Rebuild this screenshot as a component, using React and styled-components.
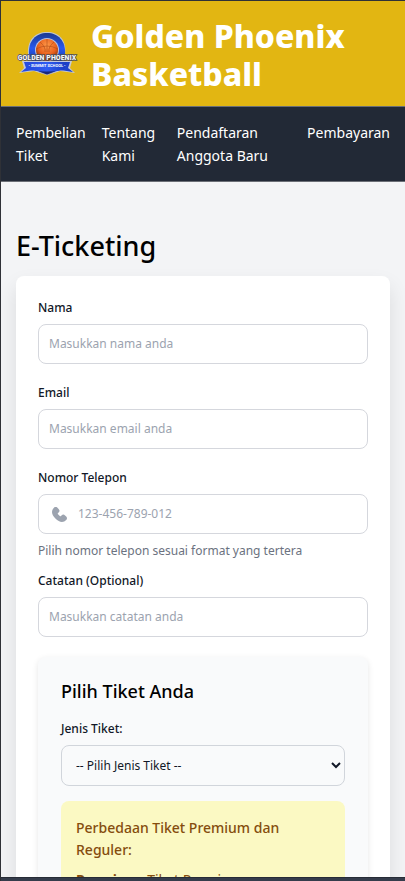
import React from "react";
import styled, { createGlobalStyle } from "styled-components";

const Global = createGlobalStyle`
  *, *::before, *::after { box-sizing: border-box; }
  body {
    margin: 0;
    font-family: "Noto Sans", "Open Sans", sans-serif;
    color: #000;
    background: #f3f4f6;
  }
  h1, h2, h3, p { margin: 0; font-weight: inherit; }
  input, select { font-family: inherit; color: inherit; }
`;

const Frame = styled.div`
  display: flex;
  flex-direction: column;
  height: 100vh;
  border: solid #2f3137;
  border-width: 1px 0 0 1px;
`;

const Viewport = styled.div`
  flex: 1;
  min-height: 0;
  overflow-y: auto;
  scrollbar-width: none;
  background: #f3f4f6;
`;

const BottomEdge = styled.div`
  flex: none;
  height: 4px;
  background: #353c4b;
  border-top: 1px solid #272c36;
`;

const Header = styled.header`
  display: flex;
  align-items: center;
  gap: 15px;
  padding: 16px 15px 13px;
  background: #e2b612;
`;

const Brand = styled.h1`
  flex: 1;
  font-size: 32px;
  line-height: 38px;
  font-weight: 800;
  color: #fff;
`;

const Nav = styled.nav`
  display: grid;
  grid-template-columns: 69fr 60fr 116fr 82fr;
  gap: 16px;
  padding: 14px 15px;
  background: #222936;
  border: solid #6b6f76;
  border-width: 1px 0;
`;

const NavLink = styled.a`
  font-size: 14px;
  line-height: 23px;
  color: #fff;
  text-decoration: none;
`;

const Main = styled.main`
  padding: 45px 15px;
`;

const PageTitle = styled.h2`
  margin-bottom: 11px;
  font-size: 27px;
  line-height: 38px;
  font-weight: 500;
`;

const Card = styled.form`
  padding: 23px 22px;
  background: #fff;
  border-radius: 8px;
  box-shadow: 0 10px 20px rgba(0, 0, 0, 0.1);
`;

const Field = styled.div`
  display: flex;
  flex-direction: column;
  margin-bottom: ${(p) => p.$gap || 20}px;
`;

const Label = styled.label`
  margin-bottom: 7px;
  font-size: 12px;
  line-height: 18px;
  font-weight: 500;
  color: #111827;
`;

const InputBox = styled.div`
  display: flex;
  align-items: center;
  gap: 11px;
  height: 40px;
  padding: 0 10px;
  padding-left: ${(p) => (p.$withIcon ? "13px" : "10px")};
  border: 1px solid #d5d7dd;
  border-radius: 8px;
`;

const TextInput = styled.input`
  flex: 1;
  min-width: 0;
  padding: 0;
  border: 0;
  outline: 0;
  background: transparent;
  font-size: 12px;
  line-height: 20px;
  &::placeholder { color: #9ca3af; opacity: 1; }
`;

const Hint = styled.p`
  margin-top: 7px;
  font-size: 12px;
  line-height: 19px;
  color: #6b7280;
`;

const TicketPanel = styled.section`
  padding: 22px 23px;
  background: #f9fafb;
  border-radius: 8px;
  box-shadow: 0 2px 6px rgba(0, 0, 0, 0.1);
`;

const PanelTitle = styled.h3`
  margin-bottom: 17px;
  font-size: 18px;
  line-height: 24px;
  font-weight: 500;
`;

const Select = styled.select`
  width: 100%;
  height: 41px;
  padding: 0 10px;
  border: 1px solid #d1d5db;
  border-radius: 8px;
  background: #f9fafb;
  font-size: 12px;
  color: #111827;
`;

const Notice = styled.div`
  padding: 16px 15px;
  background: #fbf9c3;
  border-radius: 8px;
  color: #854d0e;
  font-size: 14px;
  line-height: 22px;
`;

const NoticeTitle = styled.p`
  margin-bottom: 8px;
  font-weight: 500;
`;

const LogoSvg = styled.svg`
  flex: none;
  overflow: visible;
`;

const Logo = () => (
  <LogoSvg width="60" height="46" viewBox="0 2 60 46" role="img" aria-label="Golden Phoenix">
    <defs>
      <radialGradient id="ball" cx="0.5" cy="0.3" r="0.7">
        <stop offset="0" stopColor="#ff9a4a" />
        <stop offset="0.6" stopColor="#e8601c" />
        <stop offset="1" stopColor="#7c2b08" />
      </radialGradient>
      <linearGradient id="ring" x2="0" y2="1">
        <stop offset="0" stopColor="#1c3a91" />
        <stop offset="0.4" stopColor="#2859ef" />
        <stop offset="1" stopColor="#15236b" />
      </linearGradient>
      <linearGradient id="ribbon" x2="1">
        <stop offset="0" stopColor="#2448dc" />
        <stop offset="0.5" stopColor="#2e5cf2" />
        <stop offset="1" stopColor="#173bc0" />
      </linearGradient>
    </defs>
    <path d="M12 24C11 10 19 2 31 2s20 8 18 22l-3 12-15 8-15-8z" fill="#bfc5cd" />
    <path d="M13 24C12 11 20 3 31 3s19 8 18 21l-4 10-14 7-14-7z" fill="url(#ring)" />
    <circle cx="31" cy="20" r="12" fill="#b9c3dc" />
    <circle cx="31" cy="20" r="11" fill="url(#ball)" />
    <path d="M31 9v13M20 19q11-6 22 0M24 12q6 5 5 10M38 12q-6 5-5 10" fill="none" stroke="#b04a18" strokeWidth="0.6" />
    <path d="M3 43l5-5-2-7h50l-2 7 5 5-15-2q-13 6-26 0z" fill="#c4c9da" />
    <path d="M5 42l5-4-2-6h46l-2 6 5 4-13-2q-13 5-26 0z" fill="url(#ribbon)" />
    <path d="M19 39q12 3 24 0l-4 3-8 3-8-3z" fill="#18277a" stroke="#c4c9da" strokeWidth="0.7" />
    <path d="M11 32h40l-3 8q-17 3-34 0z" fill="url(#ribbon)" />
    <text x="31" y="30" textAnchor="middle" fontFamily="'Liberation Sans Narrow', 'Roboto Condensed', 'Liberation Sans', sans-serif" fontWeight="700" fontSize="8" fill="#f6f7f9" stroke="#4a4d58" strokeWidth="1.6" paintOrder="stroke">GOLDEN PHOENIX</text>
    <text x="31" y="37" textAnchor="middle" fontFamily="Roboto, sans-serif" fontWeight="700" fontSize="4" fill="#fff">• SUMMIT SCHOOL •</text>
  </LogoSvg>
);

const PhoneIcon = () => (
  <svg width="15" height="15" viewBox="0 0 18 18" fill="#9ca3af" aria-hidden="true">
    <path d="M18 13.446a3.02 3.02 0 0 0-.946-1.985l-1.4-1.4a3.054 3.054 0 0 0-4.218 0l-.7.7a.983.983 0 0 1-1.39 0l-2.1-2.1a.983.983 0 0 1 0-1.389l.7-.7a2.98 2.98 0 0 0 0-4.217l-1.4-1.4a2.824 2.824 0 0 0-4.218 0c-3.619 3.619-3 8.229 1.752 12.979C6.785 16.639 9.45 18 11.912 18a7.175 7.175 0 0 0 5.139-2.325A2.9 2.9 0 0 0 18 13.446Z" />
  </svg>
);

const links = ["Pembelian Tiket", "Tentang Kami", "Pendaftaran Anggota Baru", "Pembayaran"];

export default function App() {
  return (
    <>
      <Global />
      <Frame>
        <Viewport>
          <Header>
            <Logo />
            <Brand>Golden Phoenix Basketball</Brand>
          </Header>
          <Nav>
            {links.map((text) => (
              <NavLink key={text} href="#">{text}</NavLink>
            ))}
          </Nav>
          <Main>
            <PageTitle>E-Ticketing</PageTitle>
            <Card>
              <Field>
                <Label htmlFor="name">Nama</Label>
                <InputBox>
                  <TextInput id="name" type="text" placeholder="Masukkan nama anda" />
                </InputBox>
              </Field>
              <Field>
                <Label htmlFor="email">Email</Label>
                <InputBox>
                  <TextInput id="email" type="email" placeholder="Masukkan email anda" />
                </InputBox>
              </Field>
              <Field $gap={12}>
                <Label htmlFor="phone">Nomor Telepon</Label>
                <InputBox $withIcon>
                  <PhoneIcon />
                  <TextInput id="phone" type="tel" placeholder="123-456-789-012" />
                </InputBox>
                <Hint>Pilih nomor telepon sesuai format yang tertera</Hint>
              </Field>
              <Field>
                <Label htmlFor="note">Catatan (Optional)</Label>
                <InputBox>
                  <TextInput id="note" type="text" placeholder="Masukkan catatan anda" />
                </InputBox>
              </Field>
              <TicketPanel>
                <PanelTitle>Pilih Tiket Anda</PanelTitle>
                <Field $gap={15}>
                  <Label htmlFor="ticket">Jenis Tiket:</Label>
                  <Select id="ticket" defaultValue="">
                    <option value="">-- Pilih Jenis Tiket --</option>
                    <option value="premium">Premium</option>
                    <option value="reguler">Reguler</option>
                  </Select>
                </Field>
                <Notice>
                  <NoticeTitle>Perbedaan Tiket Premium dan Reguler:</NoticeTitle>
                  <p><strong>Premium:</strong> Tiket Premium</p>
                </Notice>
              </TicketPanel>
            </Card>
          </Main>
        </Viewport>
        <BottomEdge />
      </Frame>
    </>
  );
}
